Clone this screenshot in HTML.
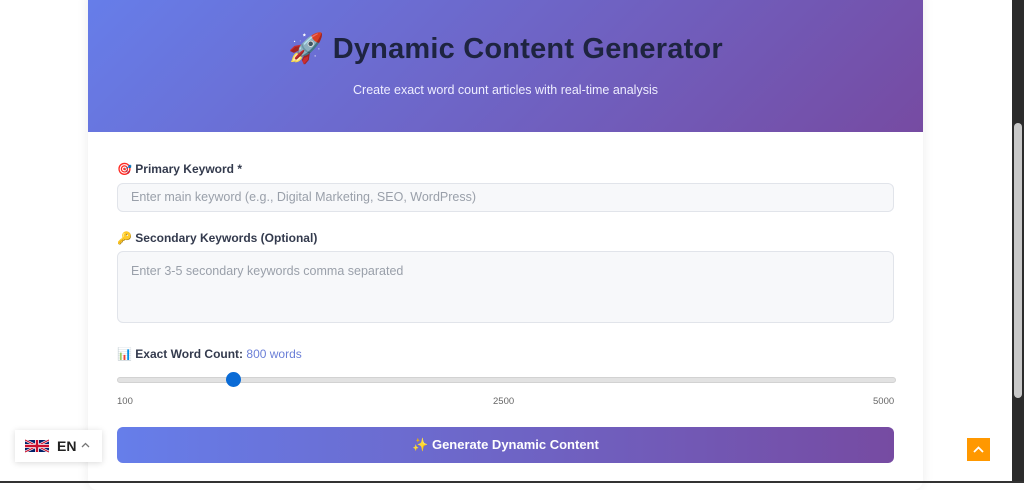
<!DOCTYPE html>
<html><head><meta charset="utf-8"><style>
*{box-sizing:border-box;margin:0;padding:0}
body{width:1024px;height:483px;overflow:hidden;background:#fff;font-family:"Liberation Sans","Noto Sans CJK SC",sans-serif;position:relative}
.card{position:absolute;left:88px;top:-10px;width:835px;height:500px;background:#fff;border-radius:10px;box-shadow:0 0 12px rgba(0,0,0,.08);overflow:hidden}
.hdr{height:142px;background:linear-gradient(135deg,#667eea 0%,#764ba2 100%);text-align:center;padding-top:42px}
.hdr h1{font-size:29px;font-weight:bold;color:#1e2440;letter-spacing:.2px}
.hdr p{color:#eef;font-size:12.5px;margin-top:17px}
.lbl{position:absolute;left:29px;font-size:12px;font-weight:bold;color:#333a4d}
.inp{position:absolute;left:29px;width:777px;background:#f7f8fa;border:1px solid #e1e4ea;border-radius:6px;color:#9aa0aa;font-size:12.5px;padding-left:13px}
.scroll{position:absolute;right:0;top:0;width:12px;height:483px;background:#2b2b2b}
.thumb{position:absolute;right:2px;top:123px;width:8px;height:275px;background:#c8c8c8;border-radius:4px}
</style></head><body>
<div class="card">
<div class="hdr"><h1>🚀 Dynamic Content Generator</h1><p>Create exact word count articles with real-time analysis</p></div>
<div class="lbl" style="top:172px">🎯 Primary Keyword *</div>
<div class="inp" style="top:193px;height:29px;line-height:27px">Enter main keyword (e.g., Digital Marketing, SEO, WordPress)</div>
<div class="lbl" style="top:241px">🔑 Secondary Keywords (Optional)</div>
<div class="inp" style="top:261px;height:72px;padding-top:12px">Enter 3-5 secondary keywords comma separated</div>
<div class="lbl" style="top:357px">📊 Exact Word Count: <span style="color:#6b7fd7;font-weight:normal">800 words</span></div>
<div style="position:absolute;left:29px;top:387px;width:779px;height:6px;background:#e2e2e2;border-radius:3px;border:1px solid #d2d2d2"></div>
<div style="position:absolute;left:138px;top:382px;width:15px;height:15px;border-radius:50%;background:#0a6bd6"></div>
<div style="position:absolute;left:29px;top:406px;font-size:9.5px;color:#666">100</div>
<div style="position:absolute;left:405px;top:406px;font-size:9.5px;color:#666">2500</div>
<div style="position:absolute;left:785px;top:406px;font-size:9.5px;color:#666">5000</div>
<div style="position:absolute;left:29px;top:437px;width:777px;height:36px;border-radius:6px;background:linear-gradient(90deg,#667eea,#764ba2);color:#fff;font-weight:bold;font-size:13px;text-align:center;line-height:36px">✨ Generate Dynamic Content</div>
</div>
<div style="position:absolute;left:15px;top:430px;width:87px;height:32px;background:#fff;box-shadow:0 1px 6px rgba(0,0,0,.15);font-weight:bold;font-size:14px;color:#222">
<svg style="position:absolute;left:10px;top:7px" width="24" height="18" viewBox="0 0 60 30"><path d="M0,0v30h60V0z" fill="#012169"/><path d="M0,0L60,30M60,0L0,30" stroke="#fff" stroke-width="6"/><path d="M0,0L60,30M60,0L0,30" stroke="#C8102E" stroke-width="3"/><path d="M30,0v30M0,15h60" stroke="#fff" stroke-width="10"/><path d="M30,0v30M0,15h60" stroke="#C8102E" stroke-width="6"/></svg>
<span style="position:absolute;left:42px;top:8px">EN</span>
<svg style="position:absolute;left:66px;top:12px" width="9" height="6" viewBox="0 0 9 6"><path d="M1,5L4.5,1.5L8,5" stroke="#777" stroke-width="1.3" fill="none"/></svg></div>
<div style="position:absolute;left:967px;top:438px;width:23px;height:23px;background:#ff9800">
<svg style="position:absolute;left:6px;top:8px" width="11" height="7" viewBox="0 0 11 7"><path d="M1,6L5.5,1.5L10,6" stroke="#fff" stroke-width="1.8" fill="none"/></svg></div>
<div class="scroll"><div class="thumb"></div></div>
<div style="position:absolute;left:0;top:481px;width:1024px;height:2px;background:#333"></div>
</body></html>
